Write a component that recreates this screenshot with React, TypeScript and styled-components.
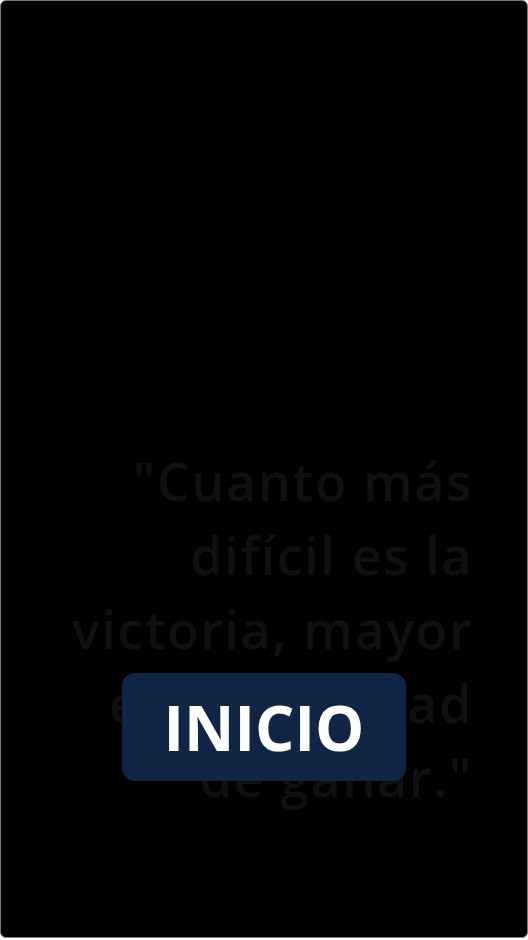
import React from "react";
import styled, { createGlobalStyle } from "styled-components";

const Global = createGlobalStyle`
  html, body { margin: 0; padding: 0; background: #ffffff; }
  * { box-sizing: border-box; }
`;

const Frame = styled.div`
  position: relative;
  width: 528px;
  height: 938px;
  background: #000000;
  border: 1px solid #7a7a7a;
  border-radius: 6px;
  overflow: hidden;
  display: flex;
  flex-direction: column;
  align-items: flex-end;
  padding: 443px 54px 0 0;
`;

const Quote = styled.p`
  margin: 0;
  font-family: "Open Sans", "Noto Sans", sans-serif;
  font-weight: 600;
  font-size: 52px;
  line-height: 74px;
  letter-spacing: 1.6px;
  text-align: right;
  color: #101010;
`;

const Line = styled.span`
  display: block;
  white-space: nowrap;
`;

const StartButton = styled.button`
  position: absolute;
  left: 121px;
  top: 672px;
  width: 284px;
  height: 108px;
  border: none;
  border-radius: 13px;
  background: #112545;
  color: #ffffff;
  font-family: "Open Sans", "Noto Sans", sans-serif;
  font-weight: 700;
  font-size: 62px;
  letter-spacing: 0;
  display: flex;
  align-items: center;
  justify-content: center;
  padding: 0;
  cursor: pointer;
`;

const lines = ['"Cuanto más', "difícil es la", "victoria, mayor", "es la felicidad", 'de ganar."'];

export default function App() {
  return (
    <>
      <Global />
      <Frame>
        <Quote>
          {lines.map((l) => (
            <Line key={l}>{l}</Line>
          ))}
        </Quote>
        <StartButton>INICIO</StartButton>
      </Frame>
    </>
  );
}
